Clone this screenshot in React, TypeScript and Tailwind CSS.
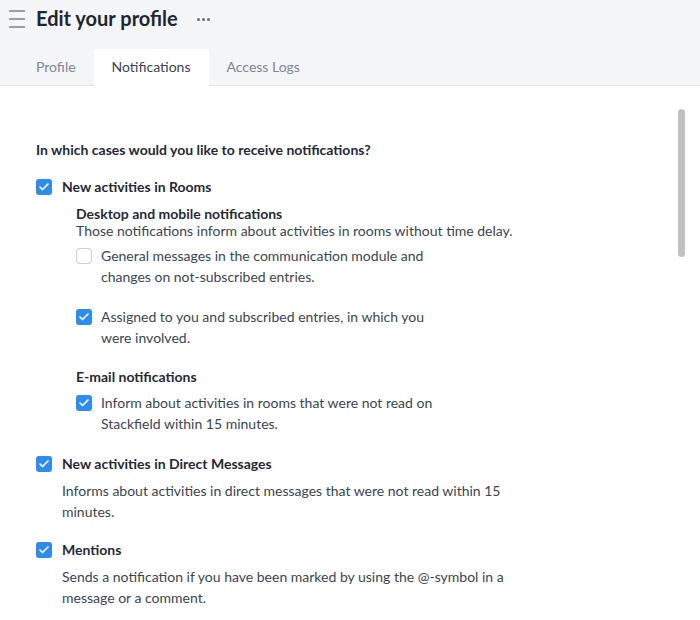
import { Check } from 'lucide-react';

function Box({ checked }: { checked: boolean }) {
  return checked ? (
    <span className="flex h-4 w-4 shrink-0 items-center justify-center rounded-[3px] bg-[#2d8cf0]">
      <Check className="h-3 w-3 text-white" strokeWidth={3.5} />
    </span>
  ) : (
    <span className="block h-4 w-4 shrink-0 rounded-[3px] border border-[#cfd3d8] bg-white" />
  );
}

function Option({ checked, children }: { checked: boolean; children: React.ReactNode }) {
  return (
    <div className="flex items-start gap-[9px]">
      <div className="pt-[3px]">
        <Box checked={checked} />
      </div>
      <p className="w-[345px] text-[#3a4550]">{children}</p>
    </div>
  );
}

function Section({
  title,
  children,
}: {
  title: string;
  children?: React.ReactNode;
}) {
  return (
    <div>
      <div className="flex items-center gap-[10px]">
        <Box checked />
        <span className="font-bold text-[#1f2a36]">{title}</span>
      </div>
      <div className="pl-[26px]">{children}</div>
    </div>
  );
}

export default function App() {
  const tabs = ['Profile', 'Notifications', 'Access Logs'];

  return (
    <div
      className="flex h-[620px] w-[700px] flex-col overflow-hidden bg-white text-[14px] leading-[21px]"
      style={{ fontFamily: 'Lato, "Noto Sans", sans-serif' }}
    >
      {/* header */}
      <div className="bg-[#f4f5f7] border-b border-[#e3e5e8]">
        <div className="flex h-[37px] items-center pl-[9px]">
          <div className="flex w-[16px] flex-col gap-[6px]">
            <span className="h-[2px] bg-[#9a9da2]" />
            <span className="h-[2px] bg-[#9a9da2]" />
            <span className="h-[2px] bg-[#9a9da2]" />
          </div>
          <h1 className="ml-[11px] text-[20px] font-bold text-[#1c2733]">Edit your profile</h1>
          <div className="ml-[19px] flex gap-[2px] pt-[1px]">
            <span className="h-[3px] w-[3px] rounded-full bg-[#6a6d72]" />
            <span className="h-[3px] w-[3px] rounded-full bg-[#6a6d72]" />
            <span className="h-[3px] w-[3px] rounded-full bg-[#6a6d72]" />
          </div>
        </div>
        <div className="mt-[12px] flex pl-[18px]">
          {tabs.map((t) => (
            <div
              key={t}
              className={`-mb-px h-[37px] rounded-t-[3px] px-[18px] pt-[7px] ${
                t === 'Notifications' ? 'bg-white text-[#3b434c]' : 'text-[#7b8794]'
              }`}
            >
              {t}
            </div>
          ))}
        </div>
      </div>

      {/* body */}
      <div className="relative flex-1">
        <div className="absolute right-[15px] top-[23px] h-[148px] w-[7px] rounded-full bg-[#c1c1c1]" />
        <div className="pl-[36px] pt-[53px]">
          <p className="font-bold text-[#1f2a36]">In which cases would you like to receive notifications?</p>

          <div className="mt-[16px]">
            <Section title="New activities in Rooms">
              <div className="pl-[14px] pt-[9px]">
                <p className="font-bold leading-[16px] text-[#1f2a36]">Desktop and mobile notifications</p>
                <p className="-mt-[2px] text-[#3a4550]">
                  Those notifications inform about activities in rooms without time delay.
                </p>
                <div className="mt-[4px] flex flex-col gap-[19px]">
                  <Option checked={false}>
                    General messages in the communication module and changes on not-subscribed entries.
                  </Option>
                  <Option checked>
                    Assigned to you and subscribed entries, in which you were involved.
                  </Option>
                </div>
                <p className="mt-[18px] font-bold text-[#1f2a36]">E-mail notifications</p>
                <div className="mt-[5px]">
                  <Option checked>
                    Inform about activities in rooms that were not read on Stackfield within 15 minutes.
                  </Option>
                </div>
              </div>
            </Section>
          </div>

          <div className="mt-[19px]">
            <Section title="New activities in Direct Messages">
              <p className="mt-[6px] w-[440px] text-[#3a4550]">
                Informs about activities in direct messages that were not read within 15 minutes.
              </p>
            </Section>
          </div>

          <div className="mt-[17px]">
            <Section title="Mentions">
              <p className="mt-[6px] w-[445px] text-[#3a4550]">
                Sends a notification if you have been marked by using the @-symbol in a message or a comment.
              </p>
            </Section>
          </div>
        </div>
      </div>
    </div>
  );
}
